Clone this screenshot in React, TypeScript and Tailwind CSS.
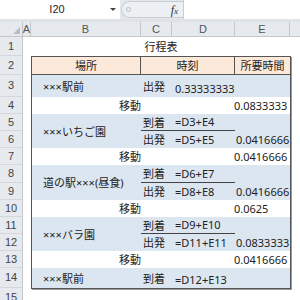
import React from "react";

interface StopRow {
  label: string;
  value: string;
  dur?: string;
  h: string; // row height class
}

interface Block {
  kind: "stop" | "move";
  name?: string;
  rows?: StopRow[];
  dur?: string;
}

const blocks: Block[] = [
  { kind: "stop", name: "×××駅前", rows: [{ label: "出発", value: "0.33333333", h: "h-[22px]" }] },
  { kind: "move", dur: "0.0833333" },
  {
    kind: "stop",
    name: "×××いちご園",
    rows: [
      { label: "到着", value: "=D3+E4", h: "h-[17px]" },
      { label: "出発", value: "=D5+E5", dur: "0.0416666", h: "h-[17px]" },
    ],
  },
  { kind: "move", dur: "0.0416666" },
  {
    kind: "stop",
    name: "道の駅×××(昼食)",
    rows: [
      { label: "到着", value: "=D6+E7", h: "h-[18px]" },
      { label: "出発", value: "=D8+E8", dur: "0.0416666", h: "h-[17px]" },
    ],
  },
  { kind: "move", dur: "0.0625" },
  {
    kind: "stop",
    name: "×××バラ園",
    rows: [
      { label: "到着", value: "=D9+E10", h: "h-[17px]" },
      { label: "出発", value: "=D11+E11", dur: "0.0833333", h: "h-[17px]" },
    ],
  },
  { kind: "move", dur: "0.0416666" },
  { kind: "stop", name: "×××駅前", rows: [{ label: "到着", value: "=D12+E13", h: "h-[20px]" }] },
];

// row number column: [label, height class]
const rowNums: [string, string][] = [
  ["1", "h-[19px]"],
  ["2", "h-[19px]"],
  ["3", "h-[22px]"],
  ["4", "h-[17px]"],
  ["5", "h-[17px]"],
  ["6", "h-[17px]"],
  ["7", "h-[17px]"],
  ["8", "h-[18px]"],
  ["9", "h-[17px]"],
  ["10", "h-[17px]"],
  ["11", "h-[17px]"],
  ["12", "h-[17px]"],
  ["13", "h-[17px]"],
  ["14", "h-[20px]"],
  ["15", "h-[20px]"],
];

const App: React.FC = () => {
  return (
    <div className="w-[300px] h-[300px] overflow-hidden bg-white text-[11px] text-[#222] font-['Noto_Sans','Noto_Sans_CJK_JP',sans-serif] leading-none">
      {/* 数式バー */}
      <div className="flex h-[19px] bg-[#e4e7eb]">
        <div className="w-[120px] bg-white flex items-center">
          <span className="flex-1 text-center text-[11px] font-['Liberation_Sans',sans-serif] pl-[4px]">I20</span>
          <span className="w-0 h-0 mr-[4px] border-l-[3px] border-r-[3px] border-t-[3px] border-l-transparent border-r-transparent border-t-[#444]"></span>
        </div>
        <div className="w-[63px] flex items-center">
          <div className="ml-[1px] h-[17px] w-[62px] rounded-l-full bg-[#edf0f3] border border-r-0 border-[#c9ccd1] flex items-center">
            <span className="ml-[4px] w-[5px] h-[5px] rounded-full border border-[#b8bcc2]"></span>
            <span className="ml-auto mr-[5px] italic font-['Liberation_Serif',serif] text-[12px] text-[#333]">
              f<span className="text-[9px]">x</span>
            </span>
          </div>
        </div>
        <div className="flex-1 bg-white border-l border-[#c9ccd1]"></div>
      </div>
      <div className="h-[3px] bg-[#dfe3e8]"></div>

      {/* 列見出し */}
      <div className="flex h-[15px] bg-[#e6e9ed] border-b border-[#c3c6cb] text-[#555] font-['Liberation_Sans',sans-serif] text-[11px]">
        <div className="w-[23px] border-r border-[#c3c6cb] flex items-end justify-end pr-[2px] pb-[2px]">
          <span className="w-0 h-0 border-l-[7px] border-t-[7px] border-l-transparent border-t-transparent border-b-0 border-r-0 border-[#b9bdc3] [border-bottom:7px_solid_#b9bdc3]"></span>
        </div>
        <div className="w-[8px] border-r border-[#c3c6cb] flex items-center justify-center">A</div>
        <div className="w-[110px] border-r border-[#c3c6cb] flex items-center justify-center">B</div>
        <div className="w-[31px] border-r border-[#c3c6cb] flex items-center justify-center">C</div>
        <div className="w-[63px] border-r border-[#c3c6cb] flex items-center justify-center">D</div>
        <div className="w-[55px] border-r border-[#c3c6cb] flex items-center justify-center">E</div>
        <div className="flex-1"></div>
      </div>

      <div className="flex">
        {/* 行番号 */}
        <div className="w-[23px] flex flex-col bg-[#e6e9ed] border-r border-[#c3c6cb] text-[#444] font-['Liberation_Sans',sans-serif] text-[11px]">
          {rowNums.map(([n, h]) => (
            <div key={n} className={`${h} flex items-center justify-center border-b border-[#d3d6da] shrink-0`}>
              {n}
            </div>
          ))}
        </div>
        <div className="w-[8px]"></div>

        <div className="w-[260px] flex flex-col">
          <div className="h-[19px] flex items-center justify-center">行程表</div>

          <div className="border border-[#555] shadow-[1px_1px_0_#9a9a9a]">
            {/* 見出し */}
            <div className="flex h-[18px] bg-[#fde9d9] border-b border-[#555]">
              <div className="w-[109px] border-r border-[#555] flex items-center justify-center">場所</div>
              <div className="w-[94px] border-r border-[#555] flex items-center justify-center">時刻</div>
              <div className="flex-1 flex items-center justify-center">所要時間</div>
            </div>

            {blocks.map((b, i) =>
              b.kind === "move" ? (
                <div key={i} className="flex h-[17px] bg-white">
                  <div className="w-[109px] flex items-center justify-end -mr-[2px] relative z-10">移動</div>
                  <div className="w-[94px]"></div>
                  <div className="flex-1 flex items-center pl-[1px]">{b.dur}</div>
                </div>
              ) : (
                <div key={i} className="flex bg-[#dce6f1]">
                  <div className="w-[109px] flex items-center pl-[11px]">{b.name}</div>
                  <div className="flex-1 flex flex-col">
                    {b.rows!.map((r, j) => (
                      <div key={j} className={`flex ${r.h}`}>
                        <div
                          className={`w-[94px] flex ${
                            j === 0 && b.rows!.length > 1 ? "border-b border-[#444]" : ""
                          }`}
                        >
                          <div className="w-[31px] flex items-center pl-[2px]">{r.label}</div>
                          <div className="flex-1 flex items-end pl-[3px] pb-[3px]">{r.value}</div>
                        </div>
                        <div className="flex-1 flex items-end pl-[1px] pb-[3px]">{r.dur}</div>
                      </div>
                    ))}
                  </div>
                </div>
              )
            )}
          </div>
        </div>
      </div>
    </div>
  );
};

export default App;
